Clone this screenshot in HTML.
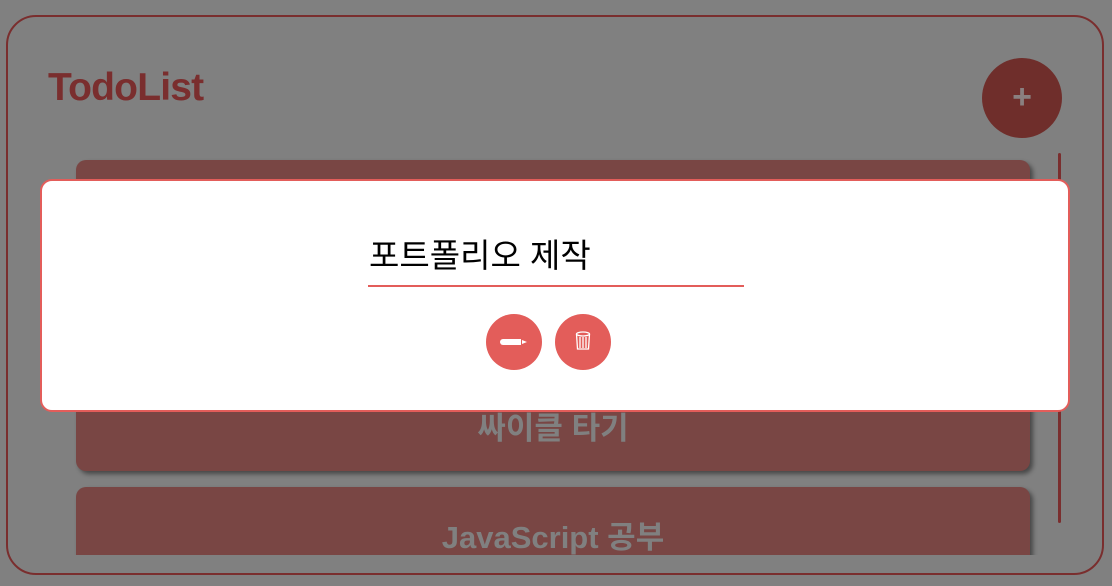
<!DOCTYPE html>
<html><head><meta charset="utf-8"><style>
html,body{margin:0;padding:0;width:1112px;height:586px;overflow:hidden;background:#808080;font-family:"Liberation Sans","Noto Sans CJK KR",sans-serif;}
.box{position:absolute;left:6px;top:15px;width:1098px;height:560px;border:2px solid #7a2e2e;border-radius:30px;box-sizing:border-box;}
.title{position:absolute;left:48px;top:66px;font-size:39px;font-weight:bold;color:#7a2e2e;letter-spacing:-0.8px;}
.plus{position:absolute;left:982px;top:58px;width:80px;height:80px;border-radius:50%;background:#6f2e2b;color:#8a8080;font-size:34px;text-align:center;line-height:78px;font-weight:bold;}
.scroll{position:absolute;left:1058px;top:153px;width:3px;height:370px;background:#7a2e2e;border-radius:2px;}
.list{position:absolute;left:60px;top:150px;width:990px;height:405px;overflow:hidden;}
.card{position:absolute;left:16px;width:954px;background:#794644;border-radius:10px;box-shadow:3px 3px 5px rgba(0,0,0,.45);color:#808080;font-weight:bold;font-size:31px;text-align:center;}
.card div{position:absolute;left:0;right:0;}
.modal{position:absolute;left:40px;top:179px;width:1030px;height:233px;background:#fff;border:2px solid #e35d5a;border-radius:12px;box-sizing:border-box;}
.inp{position:absolute;left:326px;top:50px;width:376px;height:56px;border-bottom:2px solid #e35d5a;font-size:33px;color:#000;padding-left:1px;box-sizing:border-box;line-height:50px;}
.btn{position:absolute;top:133px;width:56px;height:56px;border-radius:50%;background:#e35d5a;}
</style></head><body>
<div class="box"></div>
<div class="title">TodoList</div>
<div class="plus">+</div>
<div class="scroll"></div>
<div class="list">
 <div class="card" style="top:10px;height:150px;"></div>
 <div class="card" style="top:176px;height:145px;"><div style="top:77px;">싸이클 타기</div></div>
 <div class="card" style="top:337px;height:120px;"><div style="top:25px;">JavaScript 공부</div></div>
</div>
<div class="modal">
 <div class="inp">포트폴리오 제작</div>
 <div class="btn" style="left:444px;"><svg width="56" height="56" viewBox="0 0 56 56"><path d="M17 25 h18 v6 h-18 a3 3 0 0 1 0 -6z" fill="#fff"/><path d="M36 26 l5 2 -5 2z" fill="#fff"/></svg></div>
 <div class="btn" style="left:513px;"><svg width="56" height="56" viewBox="0 0 56 56" fill="none" stroke="#fff" stroke-width="1.3"><ellipse cx="28" cy="20" rx="6.5" ry="2"/><path d="M21.5 20 l1 15 h11 l1 -15"/><path d="M25 23v11M28 23v11M31 23v11"/></svg></div>
</div>
</body></html>
